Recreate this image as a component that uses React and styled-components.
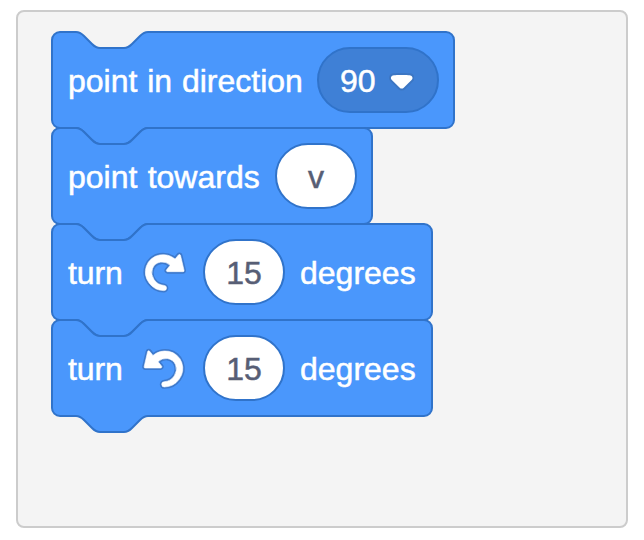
import React from "react";
import styled, { createGlobalStyle } from "styled-components";

const GlobalStyle = createGlobalStyle`
  body {
    margin: 0;
    background: #ffffff;
  }
`;

const motion = {
  primary: "#4a97fc",
  secondary: "#3f80d6",
  tertiary: "#3073ca",
  iconEdge: "#3d79cc",
};

const Page = styled.main`
  box-sizing: border-box;
  width: 644px;
  height: 540px;
  padding: 10px 16px 12px;
`;

const Workspace = styled.section`
  box-sizing: border-box;
  height: 518px;
  padding: 20px 34px;
  border: 2px solid #cccccc;
  border-radius: 8px;
  background: #f4f4f4;
`;

const Stack = styled.div`
  display: flex;
  flex-direction: column;
  align-items: flex-start;
`;

const BlockRow = styled.div`
  position: relative;
  box-sizing: border-box;
  display: flex;
  align-items: center;
  width: ${(p) => p.$width}px;
  height: 96px;
  padding-left: 16px;
`;

const Outline = styled.svg`
  position: absolute;
  left: -2px;
  top: -2px;
  fill: ${motion.primary};
  stroke: ${motion.tertiary};
`;

const Label = styled.span`
  position: relative;
  flex: none;
  width: ${(p) => p.$width}px;
  margin-right: ${(p) => p.$gap ?? 0}px;
  padding-top: 1px;
  color: #ffffff;
  font: 400 32px/36px "Liberation Sans", Arial, sans-serif;
  letter-spacing: ${(p) => p.$tracking ?? 0}px;
  word-spacing: ${(p) => p.$wordGap ?? 0}px;
  -webkit-text-stroke: 0.5px #ffffff;
  white-space: pre;
`;

const Field = styled.span`
  position: relative;
  flex: none;
  box-sizing: border-box;
  display: flex;
  align-items: center;
  justify-content: center;
  width: 82px;
  height: 66px;
  margin: 0 15px 0 -1px;
  padding-top: 1px;
  border: 2px solid ${motion.tertiary};
  border-radius: 33px;
  background: #ffffff;
  color: #575e75;
  font: 400 32px/36px "Liberation Sans", Arial, sans-serif;
  -webkit-text-stroke: 0.5px #575e75;
`;

const Dropdown = styled(Field)`
  width: 122px;
  justify-content: flex-start;
  padding-left: 21px;
  background: ${motion.secondary};
  color: #ffffff;
  -webkit-text-stroke-color: #ffffff;
`;

const Arrow = styled.svg`
  flex: none;
  margin: 3px 0 0 13px;
`;

const TurnIcon = styled.svg`
  position: relative;
  flex: none;
  margin-right: 16px;
`;

const IconEdge = styled.path`
  fill: ${motion.iconEdge};
`;

const IconBody = styled.path`
  fill: #ffffff;
  stroke: #ffffff;
  stroke-width: 0.3px;
`;

function Block({ width, children }) {
  const w = width / 2;
  return (
    <BlockRow $width={width}>
      <Outline width={width + 4} height={118} viewBox={`-1 -1 ${w + 2} 59`}>
        <path
          d={`M0 4A4 4 0 0 1 4 0H12c2 0 3 1 4 2l4 4c1 1 2 2 4 2h12c2 0 3-1 4-2l4-4c1-1 2-2 4-2H${w - 4}a4 4 0 0 1 4 4V44a4 4 0 0 1-4 4H48c-2 0-3 1-4 2l-4 4c-1 1-2 2-4 2H24c-2 0-3-1-4-2l-4-4c-1-1-2-2-4-2H4a4 4 0 0 1-4-4Z`}
        />
      </Outline>
      {children}
    </BlockRow>
  );
}

function TurnRight() {
  return (
    <TurnIcon width="48" height="48" viewBox="0 0 24 24">
      <IconEdge d="M22.68,12.2a1.6,1.6,0,0,1-1.27.63H13.72a1.59,1.59,0,0,1-1.16-2.58l1.12-1.41a4.82,4.82,0,0,0-3.14-.77,4.31,4.31,0,0,0-2,.8,4.25,4.25,0,0,0-1.34,1.73,5.06,5.06,0,0,0,.54,4.62A5.58,5.58,0,0,0,12,17.74h0a2.26,2.26,0,0,1-.16,4.52A10.25,10.25,0,0,1,3.74,18,10.14,10.14,0,0,1,2.25,8.78,9.7,9.7,0,0,1,5.08,4.64,9.92,9.92,0,0,1,9.66,2.5a10.66,10.66,0,0,1,7.72,1.68l1.08-1.35a1.57,1.57,0,0,1,1.24-.6,1.6,1.6,0,0,1,1.54,1.21l1.7,7.37A1.57,1.57,0,0,1,22.68,12.2Z" />
      <IconBody d="M21.38,11.83H13.77a.59.59,0,0,1-.43-1l1.75-2.19a5.9,5.9,0,0,0-4.7-1.58,5.07,5.07,0,0,0-4.11,3.17A6,6,0,0,0,7,15.77a6.51,6.51,0,0,0,5,2.92,1.31,1.31,0,0,1-.08,2.62,9.3,9.3,0,0,1-7.35-3.82A9.16,9.16,0,0,1,3.17,9.12,8.51,8.51,0,0,1,5.71,5.4,8.76,8.76,0,0,1,9.82,3.48a9.71,9.71,0,0,1,7.75,2.07l1.67-2.1a.59.59,0,0,1,1,.21L22,11.08A.59.59,0,0,1,21.38,11.83Z" />
    </TurnIcon>
  );
}

function TurnLeft() {
  return (
    <TurnIcon width="48" height="48" viewBox="0 0 24 24">
      <IconEdge d="M20.34,18.21a10.24,10.24,0,0,1-8.1,4.22,2.26,2.26,0,0,1-.16-4.52h0a5.58,5.58,0,0,0,4.25-2.53,5.06,5.06,0,0,0,.54-4.62A4.25,4.25,0,0,0,15.55,9a4.31,4.31,0,0,0-2-.8A4.82,4.82,0,0,0,10.4,9l1.12,1.41A1.59,1.59,0,0,1,10.36,13H2.67a1.56,1.56,0,0,1-1.26-.63A1.54,1.54,0,0,1,1.13,11L2.85,3.57A1.59,1.59,0,0,1,4.38,2.4,1.57,1.57,0,0,1,5.62,3L6.7,4.35a10.66,10.66,0,0,1,7.72-1.68A9.88,9.88,0,0,1,19,4.81,9.61,9.61,0,0,1,21.83,9,10.08,10.08,0,0,1,20.34,18.21Z" />
      <IconBody d="M19.56,17.65a9.29,9.29,0,0,1-7.35,3.83,1.31,1.31,0,0,1-.08-2.62,6.53,6.53,0,0,0,5-2.92,6.05,6.05,0,0,0,.67-5.51,5.32,5.32,0,0,0-1.64-2.16,5.21,5.21,0,0,0-2.48-1A5.86,5.86,0,0,0,9,8.84L10.74,11a.59.59,0,0,1-.43,1H2.7a.6.6,0,0,1-.6-.75L3.81,3.83a.59.59,0,0,1,1-.21l1.67,2.1a9.71,9.71,0,0,1,7.75-2.07,8.84,8.84,0,0,1,4.12,1.92,8.68,8.68,0,0,1,2.54,3.72A9.14,9.14,0,0,1,19.56,17.65Z" />
    </TurnIcon>
  );
}

function DropdownArrow() {
  return (
    <Arrow width="25.42" height="17.6" viewBox="0 0 12.71 8.8">
      <path
        fill="#231f20"
        opacity="0.1"
        d="M12.71 2.44A2.41 2.41 0 0 1 12 4.16L8.08 8.08a2.45 2.45 0 0 1-3.45 0L.72 4.16A2.42 2.42 0 0 1 0 2.44 2.48 2.48 0 0 1 .71.71C1 .47 1.43 0 6.36 0s5.39.46 5.64.71a2.44 2.44 0 0 1 .71 1.73z"
      />
      <path
        fill="#fff"
        d="M6.36 7.79a1.43 1.43 0 0 1-1-.42L1.42 3.45a1.44 1.44 0 0 1 0-2c.56-.56 9.31-.56 9.87 0a1.44 1.44 0 0 1 0 2L7.37 7.37a1.43 1.43 0 0 1-1.01.42z"
      />
    </Arrow>
  );
}

export default function App() {
  return (
    <>
      <GlobalStyle />
      <Page>
        <Workspace>
          <Stack>
            <Block width={402}>
              <Label $width={234} $gap={16} $wordGap={0.9}>point in direction</Label>
              <Dropdown>
                90
                <DropdownArrow />
              </Dropdown>
            </Block>
            <Block width={320}>
              <Label $width={192} $gap={16} $wordGap={1.4}>point towards</Label>
              <Field>v</Field>
            </Block>
            <Block width={380}>
              <Label $width={56} $gap={16} $tracking={-0.15}>turn</Label>
              <TurnRight />
              <Field>15</Field>
              <Label $width={116}>degrees</Label>
            </Block>
            <Block width={380}>
              <Label $width={56} $gap={16} $tracking={-0.15}>turn</Label>
              <TurnLeft />
              <Field>15</Field>
              <Label $width={116}>degrees</Label>
            </Block>
          </Stack>
        </Workspace>
      </Page>
    </>
  );
}
